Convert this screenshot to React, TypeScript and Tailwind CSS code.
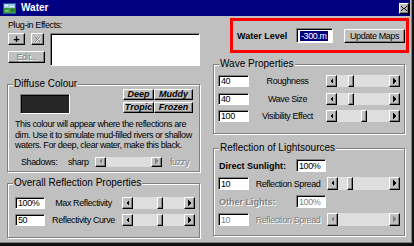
import React from 'react'

const raised =
  'bg-[#c0c0c0] border border-t-white border-l-white border-r-black border-b-black shadow-[inset_-1px_-1px_0_#808080]'
const sunken =
  'bg-white border border-t-[#808080] border-l-[#808080] border-r-white border-b-white shadow-[inset_1px_1px_0_#000]'
// the dialog font is narrower than Arial, so squeeze it a little
const narrow = "font-['Liberation_Sans',Arial,sans-serif] text-[9px] leading-[10px] tracking-[-0.4px] whitespace-nowrap"
const sans = "font-['Liberation_Sans',Arial,sans-serif]"
const dim = 'text-[#808080] [text-shadow:1px_1px_0_#fff]'

function Arrow({ dir, disabled }: { dir: 'l' | 'r'; disabled?: boolean }) {
  const pts = dir === 'l' ? '3,0 3,6 0,3' : '0,0 0,6 3,3'
  return (
    <div className={`${raised} w-[11px] h-full flex items-center justify-center shrink-0`}>
      <svg width="4" height="7" viewBox="0 0 4 7" shapeRendering="crispEdges">
        <polygon points={pts} fill={disabled ? '#808080' : '#000'} />
      </svg>
    </div>
  )
}

function Scroll({ className, thumb, disabled }: { className: string; thumb?: number; disabled?: boolean }) {
  return (
    <div className={`flex shrink-0 ${className}`}>
      <Arrow dir="l" disabled={disabled} />
      <div className="relative flex-1 bg-[#dedede]">
        {thumb !== undefined && (
          <div className={`absolute top-0 bottom-0 w-[6px] ${raised}`} style={{ left: thumb }} />
        )}
      </div>
      <Arrow dir="r" disabled={disabled} />
    </div>
  )
}

function Group({ label, className, children }: { label: string; className: string; children?: React.ReactNode }) {
  return (
    <div
      className={`relative border border-[#808080] shadow-[inset_1px_1px_0_#fff,1px_1px_0_#fff] ${className}`}
    >
      <span className={`absolute left-[5px] top-[-7px] px-px bg-[#c0c0c0] ${sans} text-[10px] leading-[11px] text-black whitespace-nowrap`}>
        {label}
      </span>
      {children}
    </div>
  )
}

function Field({ value, className, disabled }: { value: string; className: string; disabled?: boolean }) {
  return (
    <div
      className={`${sunken} ${className} shrink-0 pl-[2px] ${narrow} flex items-center ${
        disabled ? 'bg-[#c0c0c0] ' + dim : 'text-black'
      }`}
    >
      {value}
    </div>
  )
}

function SliderRow({
  value,
  label,
  thumb,
  inputW,
  barW,
  h,
}: {
  value: string
  label: string
  thumb: number
  inputW: string
  barW: string
  h: string
}) {
  return (
    <div className={`flex items-center ${h}`}>
      <Field value={value} className={`${inputW} h-full`} />
      <span className={`flex-1 text-center ${narrow} text-black`}>{label}</span>
      <Scroll className={`${barW} h-full`} thumb={thumb} />
    </div>
  )
}

function TitleIcon() {
  return (
    <svg width="13" height="11" viewBox="0 0 13 11" shapeRendering="crispEdges">
      <rect x="0" y="0" width="13" height="11" fill="#1f5f9f" />
      <rect x="1" y="1" width="11" height="4" fill="#9cc8ec" />
      <rect x="1" y="5" width="11" height="5" fill="#3c9a3c" />
      <rect x="2" y="2" width="3" height="1" fill="#fff" />
      <rect x="7" y="3" width="4" height="1" fill="#fff" />
      <rect x="2" y="7" width="4" height="2" fill="#6fc26f" />
      <rect x="8" y="6" width="3" height="2" fill="#2a6f2a" />
    </svg>
  )
}

export default function App() {
  return (
    <div className="w-[414px] h-[246px] bg-[#c0c0c0] border-r-2 border-b-[3px] border-[#101010] shadow-[inset_-1px_-1px_0_#808080] overflow-hidden">
      <div className="h-[16px] mr-[2px] bg-[#000080] flex items-center pl-[3px] pr-[1px]">
        <TitleIcon />
        <span className={`ml-[5px] ${sans} font-bold text-[10px] leading-[12px] text-white`}>Water</span>
        <div className="flex-1" />
        <div className={`${raised} w-[10px] h-[11px] flex items-center justify-center`}>
          <svg width="6" height="5" viewBox="0 0 6 5" shapeRendering="crispEdges">
            <path d="M0 0h1v1h1v1h2v-1h1v-1h1v1h-1v1h-1v1h1v1h1v1h-1v-1h-1v-1h-2v1h-1v1h-1v-1h1v-1h1v-1h-1v-1h-1z" fill="#000" />
          </svg>
        </div>
      </div>

      <div className="flex pl-[7px]">
        {/* left column */}
        <div className="w-[193px] flex flex-col">
          <div className={`${narrow} mt-[4px] ml-px text-black`}>Plug-in Effects:</div>
          <div className="flex mt-[3px] ml-px">
            <div className="w-[37px] flex flex-col">
              <div className="flex gap-[6px]">
                <div className={`${raised} w-[17px] h-[12px] flex items-center justify-center ${sans} font-bold text-[11px] leading-[11px]`}>
                  +
                </div>
                <div className={`${raised} w-[13px] h-[12px] flex items-center justify-center`}>
                  <svg width="7" height="7" viewBox="0 0 7 7">
                    <path d="M1 6L6 1M1 1L6 6" stroke="#fff" strokeWidth="1" transform="translate(0.5 0.5)" />
                    <path d="M1 6L6 1M1 1L6 6" stroke="#808080" strokeWidth="1" />
                  </svg>
                </div>
              </div>
              <div className={`${raised} mt-[6px] w-[37px] h-[12px] flex items-center justify-center ${narrow} ${dim}`}>
                Edit...
              </div>
            </div>
            <div className={`${sunken} ml-[5px] w-[150px] h-[33px]`} />
          </div>

          <Group label="Diffuse Colour" className="mt-[18px] h-[88px]">
            <div className="flex justify-between pt-[4px] pl-[12px] pr-[6px]">
              <div className="mt-[5px] w-[50px] h-[20px] border border-t-[#808080] border-l-[#808080] border-r-white border-b-white bg-[#262626] shadow-[inset_1px_1px_0_#000]" />
              <div className={`grid grid-cols-[31px_39px] ${sans} font-bold italic text-[9px] leading-[9px] text-black`}>
                {['Deep', 'Muddy', 'Tropic', 'Frozen'].map((t) => (
                  <div key={t} className={`${raised} h-[11px] flex items-center justify-center`}>
                    {t}
                  </div>
                ))}
              </div>
            </div>
            <p className={`mt-[5px] pl-[7px] ${narrow} !leading-[10.5px] text-black`}>
              This colour will appear where the reflections are
              <br />
              dim. Use it to simulate mud-filled rivers or shallow
              <br />
              waters. For deep, clear water, make this black.
            </p>
            <div className={`mt-[6px] pl-[13px] flex items-center h-[10px] ${narrow} text-black`}>
              <span className="w-[47px]">Shadows:</span>
              <span className="w-[27px]">sharp</span>
              <Scroll className="w-[67px] h-[10px]" disabled />
              <span className={`ml-[8px] ${dim}`}>fuzzy</span>
            </div>
          </Group>

          <Group label="Overall Reflection Properties" className="mt-[11px] h-[55px]">
            <div className="pt-[13px] pl-[7px] pr-[4px] flex flex-col gap-[5px]">
              <SliderRow value="100%" label="Max Reflectivity" thumb={24} inputW="w-[30px]" barW="w-[73px]" h="h-[12px]" />
              <SliderRow value="50" label="Reflectivity Curve" thumb={24} inputW="w-[30px]" barW="w-[73px]" h="h-[12px]" />
            </div>
          </Group>
        </div>

        {/* right column */}
        <div className="ml-[13px] w-[196px] flex flex-col">
          <div className="mt-[2px] ml-[17px] w-[179px] h-[35px] border-[3px] border-[#ff0000] flex items-center pl-[4px]">
            <span className={`w-[59px] ${sans} font-bold text-[9px] leading-[10px] text-black whitespace-nowrap`}>Water Level</span>
            <div className={`${sunken} w-[37px] h-[15px] flex items-center pl-[3px]`}>
              <span className={`bg-[#000080] text-white ${narrow} px-px`}>-300.m</span>
            </div>
            <div className={`${raised} ml-[11px] w-[61px] h-[14px] flex items-center justify-center ${narrow} text-black`}>
              Update Maps
            </div>
          </div>

          <Group label="Wave Properties" className="mt-[11px] w-[192px] h-[70px]">
            <div className="pt-[10px] pl-[4px] pr-[4px] flex flex-col">
              <SliderRow value="40" label="Roughness" thumb={11} inputW="w-[31px]" barW="w-[74px]" h="h-[12px]" />
              <div className="mt-[6px]">
                <SliderRow value="40" label="Wave Size" thumb={11} inputW="w-[31px]" barW="w-[74px]" h="h-[12px]" />
              </div>
              <div className="mt-[5px]">
                <SliderRow value="100" label="Visibility Effect" thumb={24} inputW="w-[31px]" barW="w-[74px]" h="h-[12px]" />
              </div>
            </div>
          </Group>

          <Group label="Reflection of Lightsources" className="mt-[14px] w-[192px] h-[88px]">
            <div className="pt-[10px] pl-[4px] pr-[4px] flex flex-col gap-[5px]">
              <div className="flex items-center h-[13px]">
                <span className={`ml-px w-[77px] ${sans} font-bold text-[9px] leading-[10px] text-black whitespace-nowrap`}>Direct Sunlight:</span>
                <Field value="100%" className="w-[30px] h-full" />
              </div>
              <SliderRow value="10" label="Reflection Spread" thumb={9} inputW="w-[31px]" barW="w-[73px]" h="h-[13px]" />
              <div className="flex items-center h-[13px]">
                <span className={`ml-px w-[77px] ${sans} font-bold text-[9px] leading-[10px] whitespace-nowrap ${dim}`}>Other Lights:</span>
                <Field value="100%" className="w-[30px] h-full" disabled />
              </div>
              <div className="flex items-center h-[13px]">
                <Field value="10" className="w-[31px] h-full" disabled />
                <span className={`flex-1 text-center ${narrow} ${dim}`}>Reflection Spread</span>
                <Scroll className="w-[73px] h-full" disabled />
              </div>
            </div>
          </Group>
        </div>
      </div>
    </div>
  )
}
